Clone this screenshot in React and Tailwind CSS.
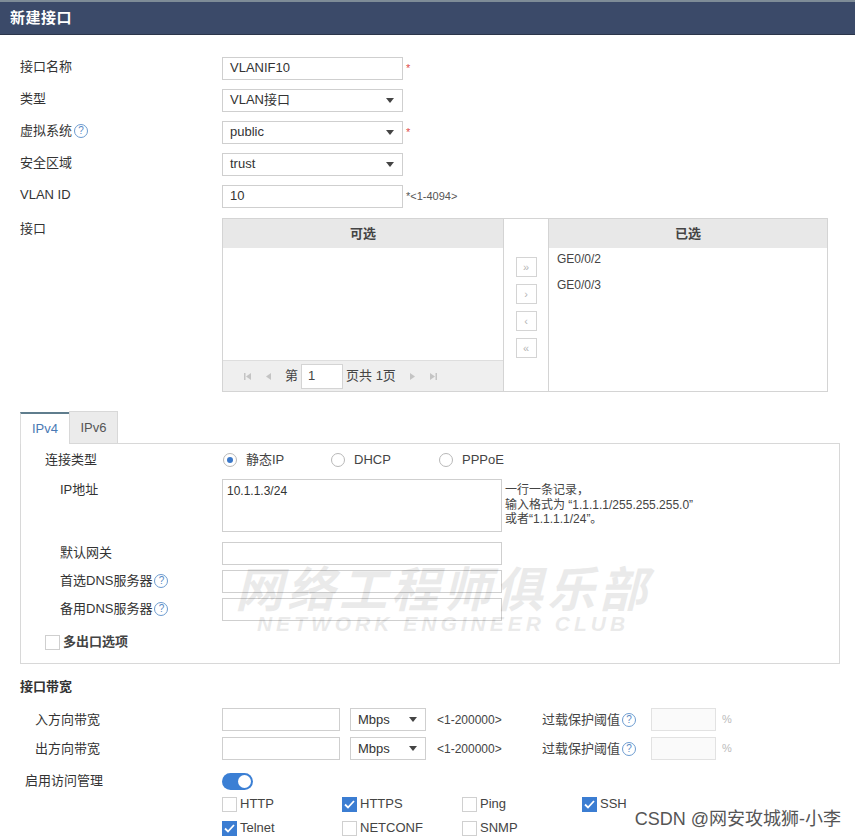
import React from 'react';

const font = { fontFamily: '"Liberation Sans", "Noto Sans CJK SC", sans-serif' };

function Help() {
    return (
        <span className="ml-[2px] inline-flex h-[14px] w-[14px] items-center justify-center rounded-full border border-[#6c9bd0] text-[10px] leading-none text-[#5a8ac4]">
            ?
        </span>
    );
}

function TextBox({ value = '', className = '' }) {
    return (
        <div className={`flex h-[23px] items-center border border-[#cfcfcf] bg-white px-[7px] text-[13px] text-[#333] ${className}`}>
            {value}
        </div>
    );
}

function SelectBox({ value, className = '' }) {
    return (
        <div className={`flex h-[23px] items-center justify-between border border-[#cfcfcf] bg-white pl-[7px] pr-[8px] text-[13px] text-[#333] ${className}`}>
            <span>{value}</span>
            <svg width="8" height="5" viewBox="0 0 8 5">
                <path d="M0 0h8L4 5z" fill="#444" />
            </svg>
        </div>
    );
}

function Row({ label, children }) {
    return (
        <div className="grid h-[32px] grid-cols-[202px_auto] items-center">
            <div className="-mt-[2px] flex items-center">{label}</div>
            <div className="flex items-center">{children}</div>
        </div>
    );
}

function Star() {
    return <span className="ml-[3px] self-start pt-[3px] text-[11px] text-[#e04b4b]">*</span>;
}

function MoveButton({ children }) {
    return (
        <div className="flex h-[20px] w-[21px] items-center justify-center border border-[#d4d4d4] bg-white text-[11px] leading-none text-[#b5b5b5]">
            {children}
        </div>
    );
}

function PagerIcon({ d }) {
    return (
        <svg width="9" height="9" viewBox="0 0 9 9">
            <path d={d} fill="#c4c4c4" />
        </svg>
    );
}

function Radio({ checked, label }) {
    return (
        <div className="flex w-[108px] items-center gap-[9px]">
            <span className="flex h-[14px] w-[14px] items-center justify-center rounded-full border border-[#b8b8b8] bg-white">
                {checked ? <span className="h-[6px] w-[6px] rounded-full bg-[#3b78c9]" /> : null}
            </span>
            <span className="text-[13px] text-[#444]">{label}</span>
        </div>
    );
}

function Check({ checked, label }) {
    return (
        <div className="flex w-[120px] items-center gap-[3px]">
            {checked ? (
                <span className="flex h-[15px] w-[15px] items-center justify-center bg-[#3b7dd2]">
                    <svg width="11" height="9" viewBox="0 0 11 9">
                        <path d="M1 4.5l3 3L10 1" stroke="#fff" strokeWidth="1.8" fill="none" />
                    </svg>
                </span>
            ) : (
                <span className="h-[15px] w-[15px] border border-[#d0d0d0] bg-white" />
            )}
            <span className="text-[13px] text-[#444]">{label}</span>
        </div>
    );
}

export default function App() {
    return (
        <div className="relative min-h-[837px] w-[855px] overflow-hidden bg-white text-[13px] text-[#333]" style={font}>
            <div className="flex h-[35px] items-center border-t-[2px] border-b border-t-[#7e8c97] border-b-[#2b354a] bg-[#3b4a69] px-[10px]">
                <span className="text-[15px] font-bold tracking-[0.5px] text-white">新建接口</span>
            </div>

            <div className="pl-[20px] pt-[17px]">
                <Row label="接口名称">
                    <TextBox value="VLANIF10" className="w-[181px]" />
                    <Star />
                </Row>
                <Row label="类型">
                    <SelectBox value="VLAN接口" className="w-[181px]" />
                </Row>
                <Row label={<>虚拟系统<Help /></>}>
                    <SelectBox value="public" className="w-[181px]" />
                    <Star />
                </Row>
                <Row label="安全区域">
                    <SelectBox value="trust" className="w-[181px]" />
                </Row>
                <Row label="VLAN ID">
                    <TextBox value="10" className="w-[181px]" />
                    <span className="ml-[3px] text-[11px] text-[#555]">*&lt;1-4094&gt;</span>
                </Row>

                <div className="mt-[6px] grid grid-cols-[202px_auto]">
                    <div className="pt-[1px]">接口</div>
                    <div className="flex h-[174px] w-[606px] border border-[#d4d4d4]">
                        <div className="flex w-[280px] flex-col">
                            <div className="flex h-[29px] items-center justify-center bg-[#e8e8e8] text-[13px] font-bold text-[#444]">可选</div>
                            <div className="flex-1" />
                            <div className="flex h-[31px] items-center gap-[12px] border-t border-[#dedede] bg-[#efefef] pl-[20px] text-[13px] text-[#444]">
                                <PagerIcon d="M1 1h1.5v7H1zM8 1v7L3 4.5z" />
                                <PagerIcon d="M7 1v7L2 4.5z" />
                                <div className="flex items-center gap-[3px]">
                                    <span>第</span>
                                    <div className="flex h-[25px] w-[42px] items-center border border-[#d4d4d4] bg-white px-[6px]">1</div>
                                    <span>页共 1页</span>
                                </div>
                                <PagerIcon d="M2 1v7l5-3.5z" />
                                <PagerIcon d="M1 1v7l5-3.5zM6.5 1H8v7H6.5z" />
                            </div>
                        </div>
                        <div className="flex w-[46px] flex-col items-center gap-[7px] border-x border-[#d4d4d4] pt-[38px]">
                            <MoveButton>»</MoveButton>
                            <MoveButton>›</MoveButton>
                            <MoveButton>‹</MoveButton>
                            <MoveButton>«</MoveButton>
                        </div>
                        <div className="flex flex-1 flex-col">
                            <div className="flex h-[29px] items-center justify-center bg-[#e8e8e8] text-[13px] font-bold text-[#444]">已选</div>
                            <div className="flex flex-col gap-[8px] pl-[8px] pt-[2px] text-[12px] text-[#444]">
                                <span>GE0/0/2</span>
                                <span>GE0/0/3</span>
                            </div>
                        </div>
                    </div>
                </div>
            </div>

            <div className="ml-[20px] mt-[19px] w-[820px]">
                <div className="flex h-[32px] items-end">
                    <div className="-mb-px flex h-[32px] w-[49px] items-center justify-center border-l border-t-[2px] border-l-[#dcdcdc] border-t-[#5f7d8d] bg-white text-[13px] text-[#4a79b4]">IPv4</div>
                    <div className="flex h-[32px] w-[49px] items-center justify-center border border-b-0 border-[#d8d8d8] bg-[#ebebeb] text-[13px] text-[#555]">IPv6</div>
                </div>
                <div className="border border-[#d8d8d8] pb-[10px] pl-[24px] pt-[3px]">
                    <div className="grid h-[26px] grid-cols-[177px_auto] items-center">
                        <span>连接类型</span>
                        <div className="flex pl-[1px]">
                            <Radio checked label="静态IP" />
                            <Radio label="DHCP" />
                            <Radio label="PPPoE" />
                        </div>
                    </div>
                    <div className="mt-[6px] grid grid-cols-[177px_auto]">
                        <span className="pl-[15px] pt-[1px]">IP地址</span>
                        <div className="flex">
                            <div className="h-[53px] w-[280px] border border-[#cfcfcf] px-[4px] pt-[2px] text-[12px]">10.1.1.3/24</div>
                            <div className="ml-[3px] pt-[4px] text-[12px] leading-[14.5px] text-[#444]">
                                <div>一行一条记录，</div>
                                <div>输入格式为 “1.1.1.1/255.255.255.0”</div>
                                <div>或者“1.1.1.1/24”。</div>
                            </div>
                        </div>
                    </div>
                    <div className="mt-[7px] grid h-[28px] grid-cols-[177px_auto] items-center">
                        <span className="pl-[15px]">默认网关</span>
                        <TextBox className="w-[280px]" />
                    </div>
                    <div className="grid h-[28px] grid-cols-[177px_auto] items-center">
                        <span className="flex items-center pl-[15px]">首选DNS服务器<Help /></span>
                        <TextBox className="w-[280px]" />
                    </div>
                    <div className="grid h-[28px] grid-cols-[177px_auto] items-center">
                        <span className="flex items-center pl-[15px]">备用DNS服务器<Help /></span>
                        <TextBox className="w-[280px]" />
                    </div>
                    <div className="mt-[8px] flex h-[22px] items-center gap-[3px]">
                        <span className="h-[15px] w-[15px] border border-[#cfcfcf] bg-white" />
                        <span className="text-[13px] font-bold text-[#444]">多出口选项</span>
                    </div>
                </div>
            </div>

            <div className="mt-[12px] flex h-[22px] items-center pl-[20px] text-[13px] font-bold text-[#333]">接口带宽</div>
            <div className="mt-[7px]">
                {['入方向带宽', '出方向带宽'].map((label) => (
                    <div key={label} className="grid h-[29px] grid-cols-[222px_auto] items-center">
                        <span className="pl-[35px]">{label}</span>
                        <div className="flex items-center">
                            <TextBox className="w-[118px]" />
                            <SelectBox value="Mbps" className="ml-[10px] w-[76px]" />
                            <span className="ml-[11px] w-[105px] text-[12px] text-[#444]">&lt;1-200000&gt;</span>
                            <span className="flex w-[109px] items-center text-[13px] text-[#444]">过载保护阈值<Help /></span>
                            <div className="h-[23px] w-[65px] border border-[#e2e2e2] bg-[#fafafa]" />
                            <span className="ml-[6px] text-[11px] text-[#bbb]">%</span>
                        </div>
                    </div>
                ))}
            </div>

            <div className="mt-[7px] grid h-[22px] grid-cols-[222px_auto] items-center">
                <span className="pl-[25px]">启用访问管理</span>
                <div className="flex h-[17px] w-[31px] items-center justify-end rounded-full bg-[#3b7fd4] pr-[2px]">
                    <span className="h-[13px] w-[13px] rounded-full bg-white" />
                </div>
            </div>
            <div className="pl-[222px]">
                <div className="flex h-[24px] items-center">
                    <Check label="HTTP" />
                    <Check checked label="HTTPS" />
                    <Check label="Ping" />
                    <Check checked label="SSH" />
                </div>
                <div className="flex h-[24px] items-center">
                    <Check checked label="Telnet" />
                    <Check label="NETCONF" />
                    <Check label="SNMP" />
                </div>
            </div>

            <div className="pointer-events-none absolute left-[228px] top-[560px] flex w-[430px] flex-col items-center opacity-[0.08]">
                <span className="whitespace-nowrap text-[48px] font-bold italic leading-[52px] tracking-[4px] text-black" style={{ fontFamily: '"Noto Sans CJK SC", sans-serif' }}>网络工程师俱乐部</span>
                <span className="whitespace-nowrap text-[21px] font-bold italic leading-[24px] tracking-[4px] text-black">NETWORK ENGINEER CLUB</span>
            </div>

            <div className="pointer-events-none absolute bottom-[7px] right-[14px] bg-white/85 pl-[6px] text-[18px] text-[#555]">
                CSDN @网安攻城狮-小李
            </div>
        </div>
    );
}
